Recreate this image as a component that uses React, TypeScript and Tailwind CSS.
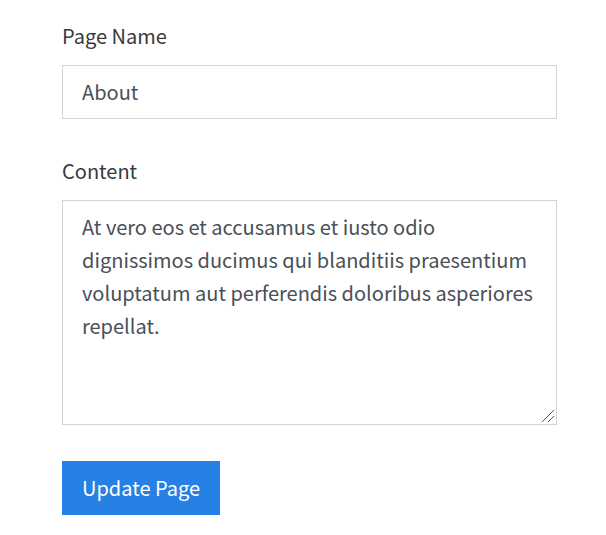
export default function App() {
  return (
    <form
      className="min-h-screen bg-white pt-[19px] pr-[49px] pb-5 pl-[62px] font-['Noto_Sans_CJK_SC','Noto_Sans',sans-serif] text-xl leading-[33px] text-[#373a3c]"
      onSubmit={(event) => event.preventDefault()}
    >
      <div className="mb-[35px]">
        <label htmlFor="page-name" className="mb-[13px] block">
          Page Name
        </label>
        <input
          id="page-name"
          type="text"
          defaultValue="About"
          className="block h-[54px] w-full border border-[#ced4da] bg-white px-[19px] pb-0.5 text-[#495057] outline-none"
        />
      </div>
      <div className="mb-9">
        <label htmlFor="content" className="mb-[13px] block">
          Content
        </label>
        <div className="relative">
          <textarea
            id="content"
            defaultValue="At vero eos et accusamus et iusto odio dignissimos ducimus qui blanditiis praesentium voluptatum aut perferendis doloribus asperiores repellat."
            className="block h-[225px] w-full resize-y border border-[#ced4da] bg-white px-[19px] py-[9px] text-[#495057] outline-none [&::-webkit-resizer]:bg-transparent"
          />
          <svg
            aria-hidden="true"
            viewBox="0 0 12 12"
            className="pointer-events-none absolute right-[3px] bottom-[3px] size-3"
            fill="none"
            stroke="#555555"
            strokeWidth="1"
          >
            <path d="M0 12 12 0M6 12l6-6" />
          </svg>
        </div>
      </div>
      <button type="submit" className="h-[54px] bg-[#2780e3] px-5 pb-0.5 text-white">
        Update Page
      </button>
    </form>
  );
}
